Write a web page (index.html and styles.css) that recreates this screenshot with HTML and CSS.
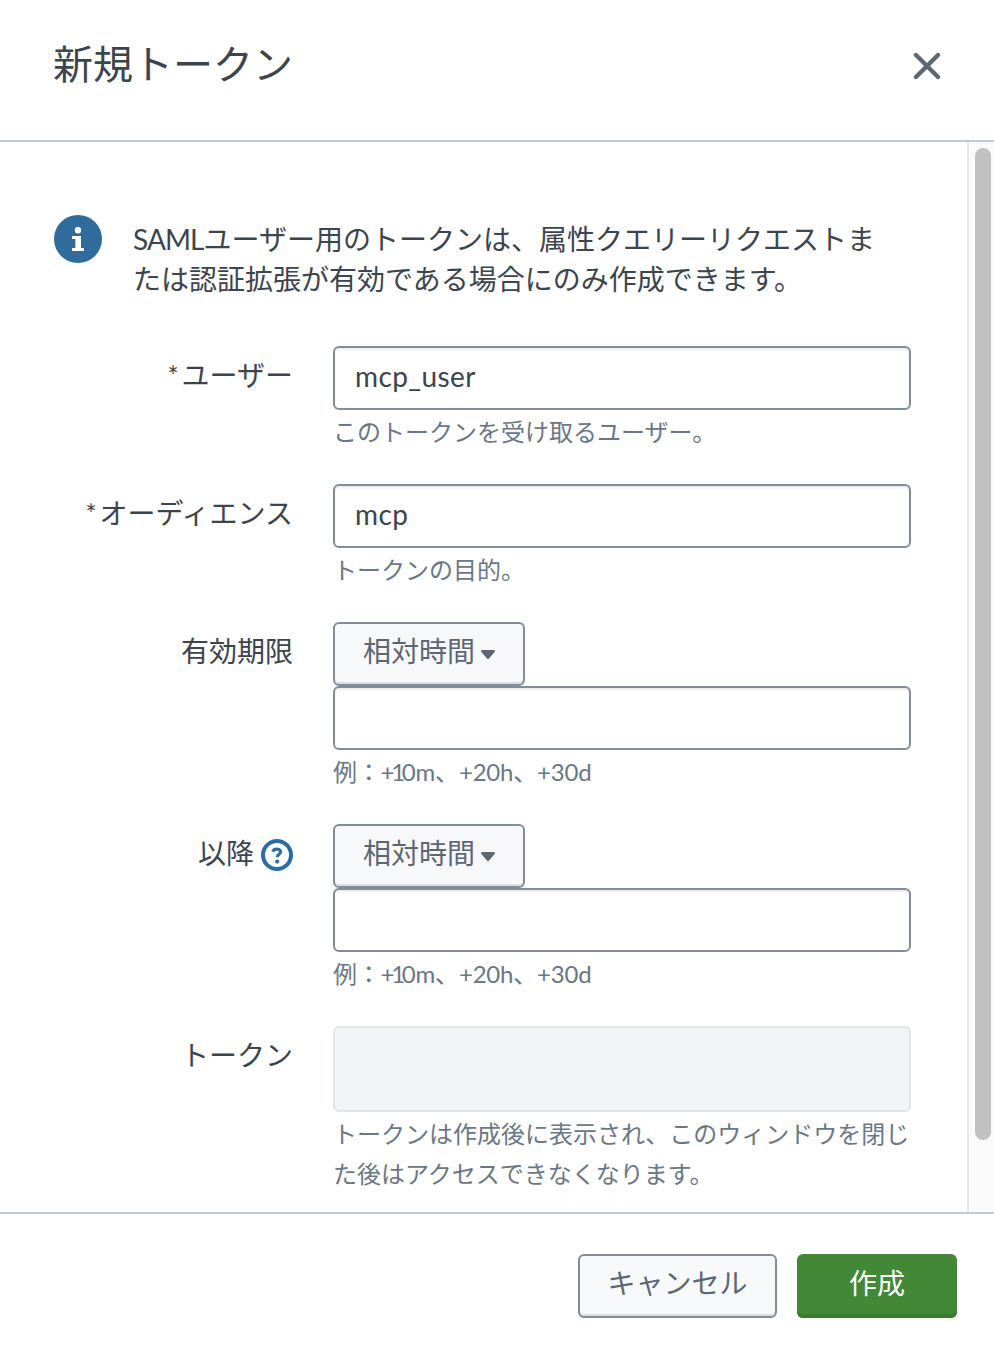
FILE: index.html
```html
<!DOCTYPE html>
<html lang="ja">
<head>
    <meta charset="UTF-8">
    <meta name="viewport" content="width=device-width, initial-scale=1.0">
    <title>新規トークン</title>
    <link rel="stylesheet" href="styles.css">
</head>
<body>

    <div class="modal">
        <div class="modal-header">
            <h1>新規トークン</h1>
            <button type="button" class="close-btn" aria-label="閉じる">
                <svg width="28" height="28" viewBox="0 0 28 28">
                    <path d="M3 3L25 25M25 3L3 25" fill="none" stroke="#5c6773" stroke-width="4.4" stroke-linecap="round"/>
                </svg>
            </button>
        </div>

        <div class="modal-body">
            <form class="token-form">
                <!-- Info message -->
                <div class="alert">
                    <svg class="info-icon" width="48" height="48" viewBox="0 0 48 48">
                        <circle cx="24" cy="24" r="24" fill="#2f6c9b"/>
                        <circle cx="24" cy="15.2" r="3.2" fill="#fff"/>
                        <path d="M18 21h9v12h3v3H18v-3h3.400v-9H18z" fill="#fff"/>
                    </svg>
                    <p>
                        <span class="line"><span class="saml">SAML</span>ユーザー用のトークンは、属性クエリーリクエストま</span>
                        <span class="line">たは認証拡張が有効である場合にのみ作成できます。</span>
                    </p>
                </div>

                <div class="row">
                    <label class="label" for="user"><span class="required">*</span>ユーザー</label>
                    <div class="controls">
                        <input type="text" id="user" class="text-input" value="mcp_user">
                        <p class="help">このトークンを受け取るユーザー。</p>
                    </div>
                </div>

                <div class="row">
                    <label class="label" for="audience"><span class="required">*</span>オーディエンス</label>
                    <div class="controls">
                        <input type="text" id="audience" class="text-input" value="mcp">
                        <p class="help">トークンの目的。</p>
                    </div>
                </div>

                <div class="row">
                    <label class="label" for="expiration">有効期限</label>
                    <div class="controls">
                        <button type="button" class="btn dropdown">相対時間
                            <svg width="14" height="9" viewBox="0 0 14 9"><path d="M1 0h12q1.500 .6 .6 2L8 8.400q-1 1-2 0L.4 2Q-.5 .6 1 0z" fill="#5c6773"/></svg>
                        </button>
                        <input type="text" id="expiration" class="text-input">
                        <p class="help example">例：<span class="narrow">+1</span>0m、+20h、+30d</p>
                    </div>
                </div>

                <div class="row">
                    <label class="label" for="notbefore">以降
                        <svg class="help-icon" width="32" height="32" viewBox="0 0 32 32">
                            <circle cx="16" cy="16" r="14" fill="none" stroke="#2b6ca8" stroke-width="4"/>
                            <path d="M12 12.800C12.400 9.200 19.600 9.100 19.600 12.800C19.600 15.200 16.200 15.300 16.200 18.300" fill="none" stroke="#2b6ca8" stroke-width="3.200"/>
                            <circle cx="16.200" cy="22.600" r="2.100" fill="#2b6ca8"/>
                        </svg>
                    </label>
                    <div class="controls">
                        <button type="button" class="btn dropdown">相対時間
                            <svg width="14" height="9" viewBox="0 0 14 9"><path d="M1 0h12q1.500 .6 .6 2L8 8.400q-1 1-2 0L.4 2Q-.5 .6 1 0z" fill="#5c6773"/></svg>
                        </button>
                        <input type="text" id="notbefore" class="text-input">
                        <p class="help example">例：<span class="narrow">+1</span>0m、+20h、+30d</p>
                    </div>
                </div>

                <div class="row">
                    <label class="label">トークン</label>
                    <div class="controls">
                        <div class="token-box"></div>
                        <p class="help">トークンは作成後に表示され、このウィンドウを閉じた後はアクセスできなくなります。</p>
                    </div>
                </div>
            </form>

            <!-- Scrollbar -->
            <div class="scroll-track">
                <div class="scroll-thumb"></div>
            </div>
        </div>

        <div class="modal-footer">
            <button type="button" class="btn cancel">キャンセル</button>
            <button type="button" class="btn primary">作成</button>
        </div>
    </div>

</body>
</html>
```
FILE: styles.css
```css
* {
    box-sizing: border-box;
}

body {
    margin: 0;
    background: #fff;
    color: #3c444d;
    font-family: Lato, "Noto Sans CJK JP", sans-serif;
    font-size: 28px;
    line-height: 40px;
}

h1,
p {
    margin: 0;
}

svg {
    display: block;
    flex: none;
}

.modal {
    display: flex;
    flex-direction: column;
    height: 1356px;
}

/* Header */
.modal-header {
    display: flex;
    justify-content: space-between;
    height: 142px;
    padding: 34px 53px 0;
    border-bottom: 2px solid #c3c8d4;
}

.modal-header h1 {
    font-size: 40px;
    font-weight: 400;
    line-height: 60px;
}

.close-btn {
    height: 28px;
    margin-top: 18px;
    padding: 0;
    border: 0;
    background: none;
}

/* Body */
.modal-body {
    display: flex;
    flex: none;
    height: 1070px;
    overflow: hidden;
}

.token-form {
    flex: 1;
    padding: 73px 56px 0 54px;
}

.alert {
    display: flex;
    gap: 31px;
    height: 131px;
}

.alert p {
    width: 750px;
    padding-top: 4px;
}

.line {
    display: block;
}

.saml {
    letter-spacing: -0.9px;
}

.row {
    display: flex;
    gap: 40px;
    margin-bottom: 32px;
}

.label {
    display: flex;
    justify-content: flex-end;
    gap: 7px;
    width: 239px;
    height: 60px;
    padding-top: 9px;
}

.required {
    margin-right: -4px;
    padding-top: 1px;
    font-size: 26px;
}

.help-icon {
    margin-top: 6px;
}

.controls {
    width: 578px;
}

.text-input {
    display: block;
    width: 100%;
    height: 64px;
    padding: 0 20px 4px;
    border: 2px solid #818d99;
    border-radius: 6px;
    background: #fff;
    box-shadow: inset 0 2px 2px rgba(0, 0, 0, 0.08);
    color: #3c444d;
    font-family: inherit;
    font-size: 28px;
    letter-spacing: 0.4px;
}

.help {
    padding-top: 2px;
    color: #6b7785;
    font-size: 24px;
}

.example {
    letter-spacing: -0.2px;
}

.narrow {
    letter-spacing: -3.3px;
}

.btn {
    display: flex;
    align-items: center;
    justify-content: center;
    height: 64px;
    padding: 0 0 6px;
    border: 2px solid #818d99;
    border-radius: 6px;
    background: #f7f8fa;
    box-shadow: inset 0 -2px 0 #dcdfe1;
    color: #5c6773;
    font-family: inherit;
    font-size: 28px;
    line-height: 40px;
}

.dropdown {
    gap: 6px;
    width: 192px;
}

.dropdown svg {
    margin-top: 6px;
}

.token-box {
    height: 86px;
    border: 2px solid #e1e6eb;
    border-radius: 6px;
    background: #f2f4f5;
}

/* Scrollbar */
.scroll-track {
    width: 27px;
    padding: 6px 3px 0 6px;
    border-left: 2px solid #e8e8e8;
    background: #fafafa;
}

.scroll-thumb {
    width: 16px;
    height: 992px;
    border-radius: 8px;
    background: #c1c1c1;
}

/* Footer */
.modal-footer {
    display: flex;
    flex: 1;
    justify-content: flex-end;
    gap: 20px;
    padding: 40px 37px 0 0;
    border-top: 2px solid #c3c8d4;
}

.cancel {
    width: 199px;
}

.primary {
    width: 160px;
    border: 0;
    background: #428837;
    box-shadow: inset 0 -4px 0 #3b7a32;
    color: #fff;
}
```
